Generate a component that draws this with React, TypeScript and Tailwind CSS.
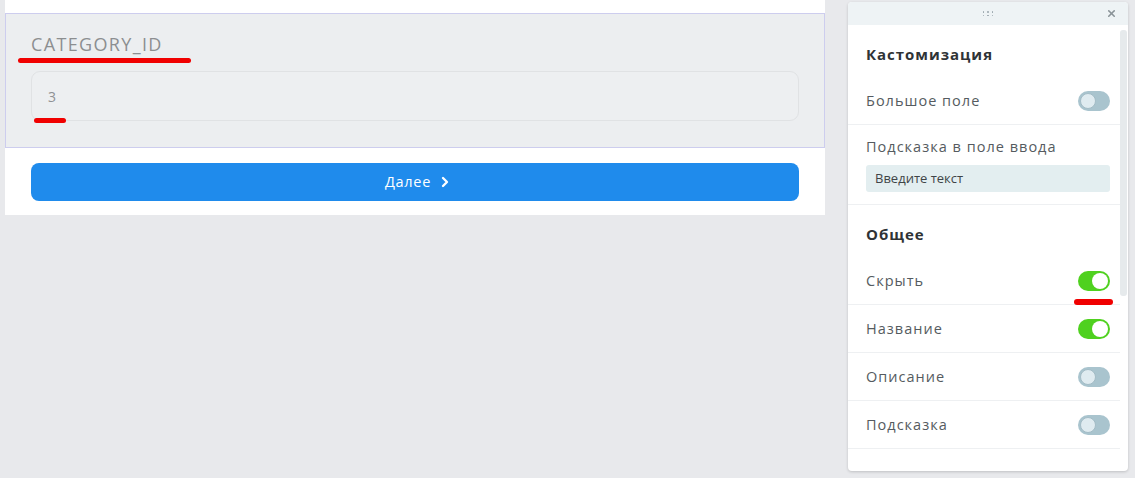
import React from 'react';
import { ChevronRight, X } from 'lucide-react';

const font = { fontFamily: '"Open Sans", "Noto Sans", sans-serif' };

const Toggle: React.FC<{ on?: boolean }> = ({ on }) => (
  <div
    className={
      on
        ? 'w-[32px] h-[20px] rounded-full bg-[#4fd11f] flex items-center justify-end px-[2px]'
        : 'w-[32px] h-[20px] rounded-full bg-[#a9c4ce] flex items-center justify-start px-[2px]'
    }
  >
    <div
      className={
        on
          ? 'w-[16px] h-[16px] rounded-full bg-white'
          : 'w-[16px] h-[16px] rounded-full bg-[#dfebf0] border border-[#a3bcc6]'
      }
    />
  </div>
);

const Row: React.FC<{ label: string; on?: boolean }> = ({ label, on }) => (
  <div className="h-[48px] flex items-center justify-between border-b border-[#eef0f2] pl-[18px] pr-[10px]">
    <span className="text-[14.5px] text-[#555b60] tracking-[0.07em]">{label}</span>
    <Toggle on={on} />
  </div>
);

const SectionTitle: React.FC<{ title: string }> = ({ title }) => (
  <div className="h-[52px] pt-[19px] pl-[18px]">
    <div className="text-[15px] leading-[20px] font-bold text-[#2f3336] tracking-[0.065em]">{title}</div>
  </div>
);

export default function App() {
  return (
    <div className="w-[1135px] h-[478px] bg-[#e8e9ec] flex items-start relative overflow-hidden" style={font}>
      {/* form preview */}
      <div className="ml-[5px] w-[820px] h-[215px] bg-white pt-[13px]">
        <div className="h-[135px] border border-[#cdcdee] bg-[#eceef0] px-[25px] pt-[18px]">
          <div className="text-[18px] leading-[25px] text-[#8c8e90] tracking-[0.075em]">CATEGORY_ID</div>
          <div className="mt-[14px] h-[50px] rounded-[9px] border border-[#e0e2e4] bg-[#edeff1] flex items-center pl-[16px]">
            <span className="text-[14px] text-[#8f9194]">3</span>
          </div>
        </div>
        <div className="px-[26px] pt-[15px]">
          <button className="w-full h-[38px] rounded-[8px] bg-[#1f8bec] text-white text-[14.5px] flex items-center justify-center gap-[6px] pl-[8px] tracking-[0.05em]">
            Далее
            <ChevronRight size={16} strokeWidth={3.5} />
          </button>
        </div>
      </div>

      {/* settings panel */}
      <div className="ml-[23px] mt-[2px] w-[280px] h-[469px] bg-white rounded-[4px] shadow-[0_1px_3px_rgba(0,0,0,0.18)] flex flex-col overflow-hidden">
        <div className="h-[23px] bg-[#eef3f5] flex items-center justify-center relative">
          <div className="grid grid-cols-3 gap-x-[3px] gap-y-[2px]">
            {Array.from({ length: 6 }).map((_, i) => (
              <span key={i} className="w-[1.5px] h-[1.5px] rounded-full bg-[#9aa6ad]" />
            ))}
          </div>
          <X size={11} strokeWidth={3.5} className="absolute right-[11px] top-[6px] text-[#8a9398]" />
        </div>
        <div className="flex flex-1">
          <div className="flex-1">
            <SectionTitle title="Кастомизация" />
            <Row label="Большое поле" />
            <div className="h-[80px] border-b border-[#eef0f2] pl-[18px] pr-[10px] pt-[12px]">
              <div className="text-[14.5px] leading-[20px] text-[#555b60] tracking-[0.07em]">Подсказка в поле ввода</div>
              <div className="mt-[8px] h-[27px] rounded-[3px] bg-[#e3eef0] flex items-center pl-[9px] text-[13px] text-[#3f4447]">
                Введите текст
              </div>
            </div>
            <SectionTitle title="Общее" />
            <Row label="Скрыть" on />
            <Row label="Название" on />
            <Row label="Описание" />
            <Row label="Подсказка" />
          </div>
          <div className="w-[8px] pt-[5px] pr-[1px]">
            <div className="w-[7px] h-[266px] rounded-[3px] bg-[#e6eaec]" />
          </div>
        </div>
      </div>

      {/* red annotation marks */}
      <div className="absolute left-[18px] top-[58px] w-[173px] h-[5px] rounded-full bg-[#f00000]" />
      <div className="absolute left-[34px] top-[118px] w-[32px] h-[5px] rounded-full bg-[#f00000]" />
      <div className="absolute left-[1074px] top-[299px] w-[39px] h-[6px] rounded-full bg-[#f00000]" />
    </div>
  );
}
